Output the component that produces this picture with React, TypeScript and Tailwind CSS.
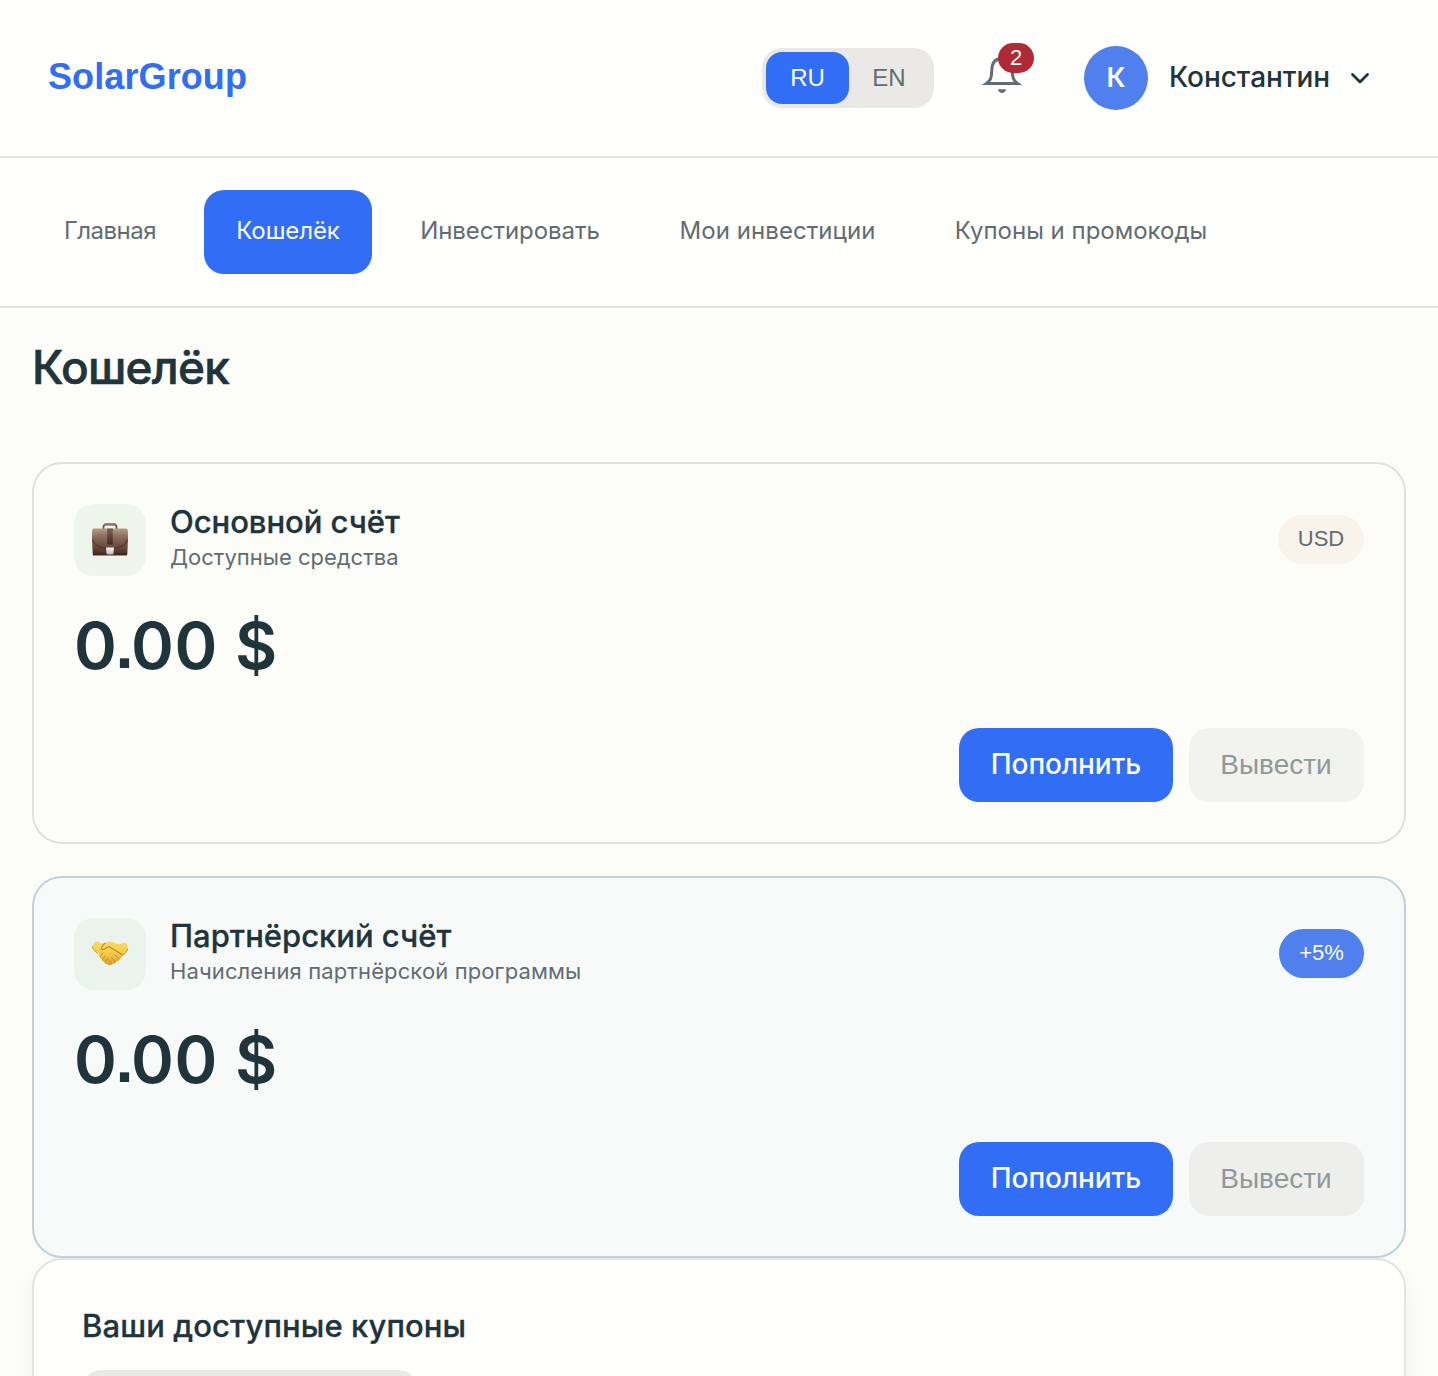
import type { ReactNode } from 'react';

function BriefcaseIcon() {
  return (
    <svg width="38" height="36" viewBox="0 0 38 36">
      <defs>
        <linearGradient id="leather" x1="0" y1="0" x2="0" y2="1">
          <stop offset="0" stopColor="#b49c89" />
          <stop offset="0.3" stopColor="#8b6e5b" />
          <stop offset="0.65" stopColor="#6b4c3d" />
          <stop offset="1" stopColor="#452b22" />
        </linearGradient>
        <linearGradient id="strap" x1="0" y1="0" x2="0" y2="1">
          <stop offset="0" stopColor="#7c604e" />
          <stop offset="1" stopColor="#432c22" />
        </linearGradient>
        <linearGradient id="clasp" x1="0" y1="0" x2="0" y2="1">
          <stop offset="0" stopColor="#f6f6f6" />
          <stop offset="1" stopColor="#b9b8ba" />
        </linearGradient>
      </defs>
      <path d="M12.500 8V5C12.500 3.400 13.500 2.400 15 2.400h8c1.500 0 2.500 1 2.500 2.600V8" fill="none" stroke="#6d5547" strokeWidth="1.800" />
      <path d="M14.500 2.300h9" stroke="#8e7465" strokeWidth="2.200" strokeLinecap="round" />
      <path d="M3 6.500h32c1 0 1.700.7 1.800 1.700L37 18l-.7 14c0 1-.6 1.500-1.500 1.500H3.200c-.9 0-1.500-.5-1.500-1.500L1 18l.2-9.800C1.300 7.200 2 6.500 3 6.500Z" fill="url(#leather)" />
      <path d="M1.300 17.500C4 24 11 26 15 26.300h8c4-.3 11-2.300 13.700-8.800" fill="none" stroke="#4b3025" strokeWidth="1.100" opacity="0.8" />
      <path d="M2 32h34" stroke="#3a231b" strokeWidth="1.500" opacity="0.6" />
      <rect x="16.200" y="6.500" width="5.600" height="16" fill="url(#strap)" />
      <path d="M15 25.500h8l-.5 5.500c-.1 1-.6 1.500-1.500 1.500h-4c-.9 0-1.400-.5-1.500-1.500Z" fill="url(#clasp)" />
    </svg>
  );
}

function HandshakeIcon() {
  return (
    <svg width="38" height="36" viewBox="0 0 38 36">
      <defs>
        <linearGradient id="skin" x1="0" y1="0" x2="0" y2="1">
          <stop offset="0" stopColor="#fbdc63" />
          <stop offset="0.6" stopColor="#f2c544" />
          <stop offset="1" stopColor="#d79b2b" />
        </linearGradient>
      </defs>
      <path d="M1 9.500C3 6.500 5 5.300 7.500 5.800L10 7.200l4-.2c2-1.500 5-2 8-1l4.500 2 4-.3C32 6.300 33.500 6.300 35 7c1.300 1.500 1.800 3.500 2 5.500-.3 2.500-2.500 4.500-5 6-.5 2.500-1.500 3.500-3.200 4.200-.5 2-2 2.800-3.600 2.900-.8 1.900-2.200 2.500-3.700 2.200-1.600 1.800-3.900 2-5 .2-1.900.4-3.100-.7-3.200-2.300-1.900-.1-2.500-1-2.300-2.500-1.800-.2-2.400-1.300-1.700-3-1.800-.5-2.100-1.600-1.300-3.200C4.500 16 1.500 14 1 9.500Z" fill="url(#skin)" />
      <path d="M14 7.200c-2 1.200-3.200 3-3.500 5.200-.1 1.500 2.300 1.500 3.700.2 1.200-1.200 2.200-1.800 3.800-1.800 3 1.500 8.500 5 13.500 8.200" fill="none" stroke="#bd8424" strokeWidth="1.100" strokeLinecap="round" />
      <path d="M24 19l4.300 3.800M20.500 21.500l4.200 4M17.300 24l3.600 3.500" fill="none" stroke="#c48a2a" strokeWidth="0.900" strokeLinecap="round" />
      <path d="M11.500 17.500l-2.200 3M14 20l-2.300 3.300M16.500 22.500l-2 3" fill="none" stroke="#c28a28" strokeWidth="1" strokeLinecap="round" />
      <path d="M1.200 10.500c1 3.500 2.800 5.200 6 7M36.800 13c-.8 2.500-2.500 4.500-5 6" fill="none" stroke="#cf952c" strokeWidth="1" />
    </svg>
  );
}

function Bell() {
  return (
    <svg className="block" width="40" height="40" viewBox="0 0 40 40" fill="none">
      <path d="M4.500 28.500C9 25.500 9.600 22 9.800 15C10 7 14 3.500 20 3.500S30 7 30.200 15C30.400 22 31 25.500 35.500 28.500Z" stroke="#626c71" strokeWidth="3" />
      <path d="M16 34.500C17.200 33.600 19 33.900 20 34.500C21 33.900 22.800 33.600 24 34.500C23.400 36.700 22 38 20 38S16.600 36.700 16 34.500Z" fill="#626c71" />
    </svg>
  );
}

const navItems = [
  { label: 'Главная', box: 'w-[156px]', text: 'tracking-[-0.5px]' },
  { label: 'Кошелёк', box: 'w-[168px] bg-[#326df5] text-[#fcfcf9]', text: 'tracking-[-0.1px]' },
  { label: 'Инвестировать', box: 'w-[244px]', text: 'tracking-[-0.05px]' },
  { label: 'Мои инвестиции', box: 'w-[259px]', text: 'tracking-[0.05px]' },
  { label: 'Купоны и промокоды', box: 'w-[316px]', text: '' },
];

type AccountProps = {
  title: ReactNode;
  subtitle: ReactNode;
  icon: ReactNode;
  badge: ReactNode;
  frame: string;
  iconBg: string;
  disabledBg: string;
};

function AccountCard({ title, subtitle, icon, badge, frame, iconBg, disabledBg }: AccountProps) {
  return (
    <section className={`flex h-[382px] flex-col rounded-[30px] border-2 p-10 ${frame}`}>
      <div className="flex h-[72px] items-center">
        <div className={`flex size-[72px] shrink-0 items-center justify-center rounded-[20px] ${iconBg}`}>{icon}</div>
        <div className="ml-6 flex-1 pb-[5px] whitespace-nowrap">
          <h2 className="text-[31px] leading-[38px] font-medium [-webkit-text-stroke:0.3px_#1f343b]">{title}</h2>
          <p className="text-[22px] leading-8 text-[#626c71]">{subtitle}</p>
        </div>
        {badge}
      </div>
      <div className="mt-8 flex h-[76px] items-center text-[65px] font-semibold whitespace-pre">
        <span className="tracking-[-1.5px]">0</span>
        <span className="font-['Liberation_Sans'] font-bold tracking-[-2.5px]">.</span>
        <span className="tracking-[0.6px]">00 $</span>
      </div>
      <div className="mt-auto flex justify-end gap-4">
        <button className="h-[74px] w-[214px] rounded-[20px] bg-[#326df5] pb-0.5 text-[28px] font-medium tracking-[-0.1px] text-[#fcfcf9]">
          Пополнить
        </button>
        <button className={`h-[74px] w-[175px] rounded-[20px] pr-px font-['Liberation_Sans'] text-[28px] text-[#8f999b] ${disabledBg}`}>
          Вывести
        </button>
      </div>
    </section>
  );
}

export default function App() {
  return (
    <div className="h-[1376px] w-full overflow-hidden bg-[#fcfdf9] font-['Inter','Noto_Sans',sans-serif] text-[#1f343b]">
      <header className="flex h-[158px] items-center border-b-2 border-[#e3e3e2] bg-[#fffffd] pr-[68px] pl-12">
        <div className="flex-1 pb-0.5 font-['Liberation_Sans'] text-[36px] font-bold tracking-[0.1px] text-[#326df5]">SolarGroup</div>
        <div className="flex h-[60px] w-[172px] rounded-[20px] bg-[#ebe9e7] p-1 font-['Liberation_Sans'] text-[24px]">
          <button className="w-[83px] rounded-[16px] bg-[#326df5] text-[#fcfcf9]">RU</button>
          <button className="w-[80px] text-[#626c71]">EN</button>
        </div>
        <div className="relative -mt-1.5 ml-12 h-10 w-10">
          <Bell />
          <span className="absolute -top-3 left-4 flex h-[30px] w-9 items-center justify-center rounded-full bg-[#b02a35] pb-0.5 font-['Liberation_Sans'] text-[22px] text-[#fcfcf9]">
            2
          </span>
        </div>
        <div className="ml-[62px] flex size-16 items-center justify-center rounded-full bg-[#4f80ee] text-[27px] font-semibold text-[#fcfcf9]">
          К
        </div>
        <span className="ml-[21px] w-[162px] pb-0.5 text-[28px] font-medium tracking-[-0.05px] whitespace-nowrap">Константин</span>
        <svg className="ml-[19px]" width="20" height="20" viewBox="0 0 20 20" fill="none">
          <path d="M2.500 6.500L10 14L17.500 6.500" stroke="#1f343b" strokeWidth="2.800" strokeLinecap="round" strokeLinejoin="round" />
        </svg>
      </header>

      <nav className="flex h-[150px] gap-4 border-b-2 border-[#e3e3e2] bg-[#fffffd] px-8 pt-8 text-[24px] text-[#626c71]">
        {navItems.map((item) => (
          <a key={item.label} className={`flex h-[84px] items-center justify-center rounded-[20px] pb-0.5 whitespace-nowrap ${item.box}`}>
            <span className={item.text}>{item.label}</span>
          </a>
        ))}
      </nav>

      <main className="px-8">
        <h1 className="h-[154px] pt-[29px] text-[46px] leading-[60px] font-medium tracking-[-0.8px] [-webkit-text-stroke:0.6px_#1f343b]">Кошелёк</h1>
        <div className="flex flex-col gap-8">
          <AccountCard
            title={<span className="tracking-[-0.05px]">Основной счёт</span>}
            subtitle="Доступные средства"
            icon={<BriefcaseIcon />}
            badge={
              <span className="-mt-0.5 flex h-[49px] w-[86px] items-center justify-center rounded-full bg-[#f9f4eb] pb-0.5 font-['Liberation_Sans'] text-[22px] text-[#626c71]">
                USD
              </span>
            }
            frame="border-[#dfe0e0] bg-[#fcfdf9]"
            iconBg="bg-[#eef6ec]"
            disabledBg="bg-[#f2f2ee]"
          />
          <AccountCard
            title="Партнёрский счёт"
            subtitle={<span className="tracking-[0.12px]">Начисления партнёрской программы</span>}
            icon={<HandshakeIcon />}
            badge={
              <span className="-mt-0.5 flex h-[49px] w-[85px] items-center justify-center rounded-full bg-[#4f80ee] pb-0.5 font-['Liberation_Sans'] text-[22px] text-[#fcfcf9]">
                +5%
              </span>
            }
            frame="border-[#bdd3d9] bg-[#f8faf9]"
            iconBg="bg-[#ebf4ec]"
            disabledBg="bg-[#eeefec]"
          />
        </div>
        <section className="h-[400px] rounded-[30px] border-2 border-[#e3e3e3] bg-[#fffffd] px-12 pt-[46px] shadow-[0_8px_20px_rgba(0,0,0,0.05)]">
          <h2 className="text-[31px] leading-10 font-medium tracking-[0.1px] [-webkit-text-stroke:0.3px_#1f343b]">Ваши доступные купоны</h2>
          <div className="mt-6 h-20 w-[336px] rounded-[20px] bg-[#ebe9e7]" />
        </section>
      </main>
    </div>
  );
}
